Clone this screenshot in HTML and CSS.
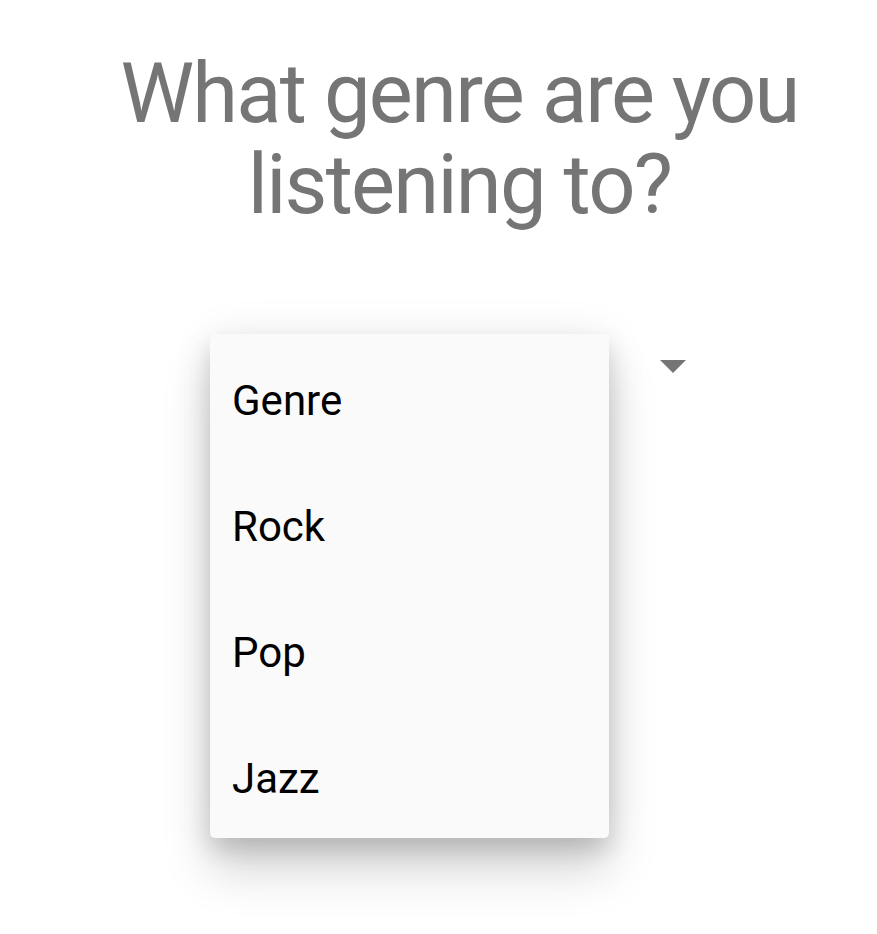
FILE: index.html
```html
<!DOCTYPE html>
<html>
<head>
<meta charset="utf-8">
<link rel="stylesheet" href="styles.css">
</head>
<body>
<main class="screen">
  <h1 class="title">What genre are you listening to?</h1>
  <div class="spinner">
    <div class="spinner-field">
      <span class="arrow"></span>
    </div>
    <ul class="menu">
      <li class="item">Genre</li>
      <li class="item">Rock</li>
      <li class="item">Pop</li>
      <li class="item">Jazz</li>
    </ul>
  </div>
</main>
</body>
</html>
```
FILE: styles.css
```css
html, body {
  margin: 0;
  padding: 0;
  background: #ffffff;
}
body {
  font-family: Roboto, "Liberation Sans", sans-serif;
}
.screen {
  width: 877px;
  height: 934px;
  overflow: hidden;
  display: flex;
  flex-direction: column;
  align-items: center;
  box-sizing: border-box;
  padding: 48px 0 0 42px;
}
.title {
  margin: 0;
  width: 720px;
  font-size: 83px;
  line-height: 91px;
  letter-spacing: -1.75px;
  font-weight: 400;
  color: #757575;
  text-align: center;
}
.spinner {
  position: relative;
  align-self: flex-start;
  margin-top: 104px;
  margin-left: 168px;
  width: 490px;
}
.spinner-field {
  height: 126px;
  display: flex;
  justify-content: flex-end;
  align-items: flex-start;
  padding-right: 14px;
}
.arrow {
  margin-top: 26px;
  width: 0;
  height: 0;
  border-left: 13px solid transparent;
  border-right: 13px solid transparent;
  border-top: 13px solid #757575;
}
.menu {
  position: absolute;
  left: 0;
  top: 0;
  width: 399px;
  margin: 0;
  padding: 0;
  list-style: none;
  background: #fafafa;
  border-radius: 5px;
  box-shadow: 0 32px 48px rgba(0, 0, 0, 0.17), 0 12px 22px rgba(0, 0, 0, 0.12), 0 0 44px rgba(0, 0, 0, 0.07);
}
.item {
  height: 119px;
  padding-top: 7px;
  line-height: 119px;
  padding-left: 22px;
  font-size: 42px;
  color: #000000;
}
```
